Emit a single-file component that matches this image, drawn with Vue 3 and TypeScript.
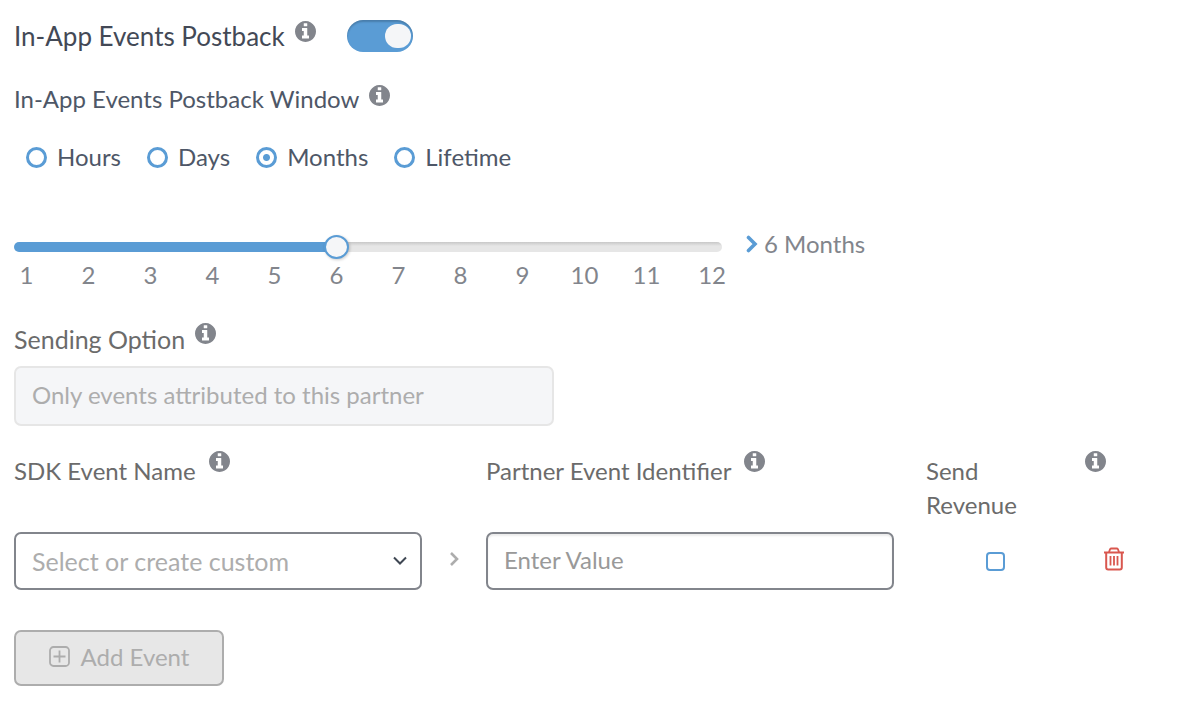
<script setup lang="ts">
import { computed, h, ref } from 'vue'

const INFO_PATH =
  'M1024 1376v-160q0-14-9-23t-23-9h-96v-512q0-14-9-23t-23-9h-320q-14 0-23 9t-9 23v160q0 14 9 23t23 9h96v320h-96q-14 0-23 9t-9 23v160q0 14 9 23t23 9h448q14 0 23-9t9-23zm-128-896v-160q0-14-9-23t-23-9h-192q-14 0-23 9t-9 23v160q0 14 9 23t23 9h192q14 0 23-9t9-23zm640 416q0 209-103 385.5t-279.5 279.5-385.5 103-385.5-103-279.5-279.5-103-385.5 103-385.5 279.5-279.5 385.5-103 385.5 103 279.5 279.5 103 385.5z'

const InfoIcon = () =>
  h('svg', { width: 21, height: 21, viewBox: '0 128 1536 1536', 'aria-hidden': 'true' }, [
    h('path', { d: INFO_PATH, fill: '#82858c' }),
  ])

const MAX = 12
const units = ['Hours', 'Days', 'Months', 'Lifetime']

const enabled = ref(true)
const unit = ref('Months')
const amount = ref(6)
const sdkEvent = ref('')
const partnerEvent = ref('')
const sendRevenue = ref(false)

const fill = computed(() => `${((amount.value - 1) / (MAX - 1)) * 100}%`)
</script>

<template>
  <form class="postback" @submit.prevent>
    <div class="row heading">
      <label for="enabled">In-App Events Postback</label>
      <InfoIcon class="info" />
      <input id="enabled" v-model="enabled" class="switch" type="checkbox" role="switch" />
    </div>

    <div class="row window-title">
      <span id="window-title">In-App Events Postback Window</span>
      <InfoIcon class="info" />
    </div>

    <div class="units" role="radiogroup" aria-labelledby="window-title">
      <label v-for="name in units" :key="name" class="unit">
        <input v-model="unit" type="radio" name="unit" :value="name" />
        {{ name }}
      </label>
    </div>

    <div class="window">
      <div class="scale">
        <input
          v-model.number="amount"
          class="range"
          type="range"
          min="1"
          :max="MAX"
          aria-labelledby="window-title"
          :style="{ '--fill': fill }"
        />
        <ol class="ticks">
          <li v-for="n in MAX" :key="n">{{ n }}</li>
        </ol>
      </div>
      <output class="amount">
        <svg width="12" height="18" viewBox="0 0 12 18" aria-hidden="true">
          <path
            d="M2.500 2.500l6.500 6.500-6.500 6.500"
            fill="none"
            stroke="#5a9cd5"
            stroke-width="3.600"
            stroke-linecap="round"
          />
        </svg>
        {{ amount }} {{ unit }}
      </output>
    </div>

    <div class="row option-title">
      <label for="option">Sending Option</label>
      <InfoIcon class="info" />
    </div>
    <input id="option" class="field option" value="Only events attributed to this partner" disabled />

    <div class="events">
      <div class="head sdk">
        <label for="sdk">SDK Event Name</label>
        <InfoIcon class="info" />
      </div>
      <div class="head partner">
        <label for="partner">Partner Event Identifier</label>
        <InfoIcon class="info" />
      </div>
      <div class="head revenue"><label for="revenue">Send Revenue</label></div>
      <div class="head revenue-info"><InfoIcon class="info" /></div>

      <div class="picker">
        <select id="sdk" v-model="sdkEvent" class="field">
          <option value="">Select or create custom</option>
        </select>
        <svg class="caret" width="14" height="10" viewBox="0 0 14 10" aria-hidden="true">
          <path d="M1 1.500l6 6 6-6" fill="none" stroke="#3f4753" stroke-width="2" />
        </svg>
      </div>
      <svg class="arrow" width="10" height="16" viewBox="0 0 10 16" aria-hidden="true">
        <path d="M2 2l6 6-6 6" fill="none" stroke="#adadad" stroke-width="2.6" />
      </svg>
      <input id="partner" v-model="partnerEvent" class="field value" placeholder="Enter Value" />
      <input id="revenue" v-model="sendRevenue" class="check" type="checkbox" />
      <button class="remove" type="button" aria-label="Delete event">
        <svg width="22" height="24" viewBox="0 0 22 24" fill="none" stroke="#d9574f" aria-hidden="true">
          <path d="M1 5.500h20M6 5l1-2.600Q7.400 1.500 8.400 1.500h5.200Q14.600 1.500 15 2.400L16 5" stroke-width="1.800" />
          <path d="M3.200 5.500v15q0 2 2 2h11.600q2 0 2-2v-15" stroke-width="2" />
          <path d="M7.500 9v9.500M11 9v9.500M14.500 9v9.500" stroke-width="1.800" />
        </svg>
      </button>
    </div>

    <button class="add" type="button" disabled>
      <svg width="21" height="21" viewBox="0 0 21 21" fill="none" stroke="#adadad" aria-hidden="true">
        <rect x="1" y="1" width="19" height="19" rx="3.500" stroke-width="1.800" />
        <path d="M10.500 4.500v12M4.500 10.500h12" stroke-width="1.800" />
      </svg>
      Add Event
    </button>
  </form>
</template>

<style>
body {
  margin: 0;
  background: #fff;
}
</style>

<style scoped>
.postback {
  padding: 20px 28px 18px 14px;
  font-family: Lato, 'Open Sans', sans-serif;
  font-size: 24px;
  line-height: 34px;
  color: #6b6b6b;
}

.postback * {
  box-sizing: border-box;
}

input,
select,
button {
  margin: 0;
  font: inherit;
}

.row,
.head {
  display: flex;
  align-items: flex-start;
  gap: 10px;
}

.info {
  flex: none;
}

.row .info {
  margin-top: 1px;
}

.heading {
  font-size: 26px;
  line-height: 32px;
  color: #434956;
}

.window-title {
  margin-top: 30px;
  color: #4e5767;
}

.window-title .info {
  margin-top: 3px;
}

.switch {
  appearance: none;
  display: flex;
  align-items: center;
  justify-content: flex-end;
  width: 66px;
  height: 32px;
  margin-left: 21px;
  padding: 2px;
  border-radius: 16px;
  background: #5a9cd5;
  box-shadow: inset 0 2px 2px rgba(0, 0, 0, 0.2);
}

.switch::before {
  content: '';
  width: 26px;
  height: 24px;
  border-radius: 13px;
  background: #f5f6f8;
}

.switch:not(:checked) {
  justify-content: flex-start;
  background: #adadad;
}

.units {
  display: flex;
  gap: 26px;
  margin: 24px 0 0 12px;
  color: #4e5767;
}

.unit {
  display: flex;
  align-items: center;
  gap: 10px;
}

.unit input {
  appearance: none;
  width: 21px;
  height: 21px;
  border: 3px solid #5a9cd5;
  border-radius: 50%;
}

.unit input:checked {
  background: radial-gradient(circle, #5a9cd5 3px, #fff 4px);
}

.window {
  display: flex;
  align-items: flex-start;
  gap: 20px;
  margin-top: 61px;
  color: #82858c;
}

.scale {
  flex: 0 1 712px;
}

.range {
  appearance: none;
  display: block;
  width: calc(100% - 4px);
  height: 24px;
  background: transparent;
}

.range::-webkit-slider-runnable-track {
  height: 10px;
  border-radius: 5px;
  background:
    linear-gradient(#5a9cd5, #5a9cd5) 0 0 / var(--fill) 100% no-repeat,
    linear-gradient(#c8c8c8, #e6e6e6 40%);
}

.range::-webkit-slider-thumb {
  appearance: none;
  width: 25px;
  height: 24px;
  margin-top: -7px;
  border: 2px solid #5a9cd5;
  border-radius: 50%;
  background: #f5f6f8;
  box-shadow: 1px 1px 3px rgba(0, 0, 0, 0.2);
}

.ticks {
  display: grid;
  grid-template-columns: repeat(11, 1fr) 30px;
  margin: 0;
  padding: 0;
  line-height: 32px;
  list-style: none;
}

.ticks li {
  display: flex;
  justify-content: center;
  width: 25px;
}

.ticks li:last-child {
  justify-content: flex-end;
  width: auto;
}

.amount {
  display: flex;
  align-items: center;
  gap: 6px;
  height: 18px;
  white-space: nowrap;
}

.option-title {
  margin-top: 31px;
  font-size: 25px;
}

.field {
  width: 100%;
  height: 58px;
  padding: 0 16px;
  border: 2px solid #82858c;
  border-radius: 7px;
  background: #fff;
  color: #6b6b6b;
}

.option {
  display: block;
  max-width: 540px;
  height: 60px;
  margin-top: 10px;
  padding-bottom: 4px;
  border-color: #e6e6e6;
  background: #f5f6f8;
  color: #adadad;
}

.events {
  display: grid;
  grid-template-columns: 1fr 64px 1fr 32px 138px 100px;
  align-items: center;
  row-gap: 10px;
  margin-top: 25px;
}

.head {
  align-self: start;
  gap: 13px;
}

.head label {
  padding-top: 3px;
}

.partner {
  grid-column: 3;
}

.revenue {
  grid-column: 5;
  padding-right: 40px;
}

.revenue-info {
  padding-left: 21px;
}

.picker {
  display: grid;
  align-items: center;
}

.picker > * {
  grid-area: 1 / 1;
}

.picker select {
  appearance: none;
  font-size: 25px;
  color: #adadad;
}

.caret {
  justify-self: end;
  margin-right: 15px;
  pointer-events: none;
}

.arrow {
  justify-self: center;
  margin-bottom: 4px;
}

.value {
  padding-bottom: 4px;
  box-shadow: inset 0 2px 2px rgba(0, 0, 0, 0.08);
}

.value::placeholder {
  color: #999;
}

.check {
  grid-column: 5;
  justify-self: center;
  appearance: none;
  width: 19px;
  height: 19px;
  border: 2px solid #5a9cd5;
  border-radius: 4px;
  background: #fff;
}

.check:checked {
  background: #5a9cd5;
}

.remove {
  display: flex;
  justify-self: center;
  padding: 0 0 4px;
  border: 0;
  background: none;
}

.add {
  display: flex;
  align-items: center;
  justify-content: center;
  gap: 11px;
  width: 210px;
  height: 56px;
  margin-top: 40px;
  padding-bottom: 4px;
  border: 2px solid #adadad;
  border-radius: 7px;
  background: #e7e7e7;
  color: #adadad;
}
</style>
